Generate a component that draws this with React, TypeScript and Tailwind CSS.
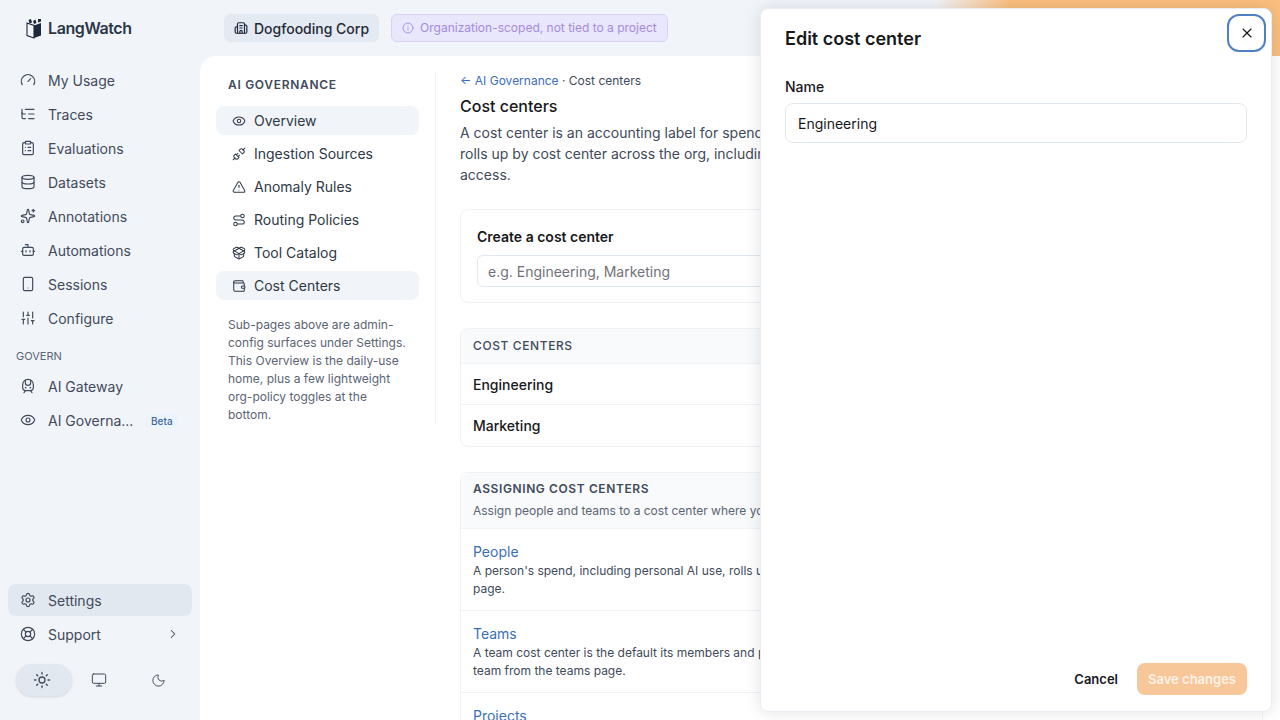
import {
  Building2, ChevronRight, ClipboardList, Database, Eye, Gauge, Info, LifeBuoy, ListTree, Monitor, Moon,
  PackageOpen, Route, Settings, SlidersVertical, Smartphone, Sparkles, Sun, TrainFront, TriangleAlert, Unplug, Wallet, X, Bot,
} from "lucide-react";

const mainNav = [
  { label: "My Usage", icon: Gauge },
  { label: "Traces", icon: ListTree },
  { label: "Evaluations", icon: ClipboardList },
  { label: "Datasets", icon: Database },
  { label: "Annotations", icon: Sparkles },
  { label: "Automations", icon: Bot },
  { label: "Sessions", icon: Smartphone },
  { label: "Configure", icon: SlidersVertical },
];

const subNav = [
  { label: "Overview", icon: Eye, active: true },
  { label: "Ingestion Sources", icon: Unplug, active: false },
  { label: "Anomaly Rules", icon: TriangleAlert, active: false },
  { label: "Routing Policies", icon: Route, active: false },
  { label: "Tool Catalog", icon: PackageOpen, active: false },
  { label: "Cost Centers", icon: Wallet, active: true },
];

function Logo() {
  return (
    <svg width="16" height="21" viewBox="0 0 16 21" className="shrink-0">
      <path d="M1 5 L8 7.5 V20 L1 17.5 Z" fill="none" stroke="#1e293b" strokeWidth="1.1" />
      <path d="M8 7.5 L15 5 V17.5 L8 20 Z" fill="#1e293b" />
      <path d="M2.5 2 L5 1 L6 4.5 L3.5 5.5 Z M7 3 L9.5 1.5 L10.5 5 L8 6 Z M12 1 L15 1 L15 3.5 L12 4.5 Z" fill="#1e293b" />
    </svg>
  );
}

function SideItem({ label, icon: Icon }: { label: string; icon: typeof Eye }) {
  return (
    <div className="flex h-[34px] items-center gap-3 pl-3 text-[#414a59]">
      <Icon size={16} strokeWidth={1.75} className="shrink-0" />
      <span className="text-[14px]">{label}</span>
    </div>
  );
}

export default function App() {
  return (
    <div className="relative flex h-screen w-[1280px] overflow-hidden bg-[#f1f5fa] font-['Inter',sans-serif] text-[#18181b]">
      <aside className="flex h-full w-[200px] shrink-0 flex-col px-2">
        <div className="flex h-[56px] items-center gap-[6px] pl-[18px] text-[16px] font-semibold tracking-[-0.4px] text-[#2b3648]">
          <Logo />
          <span>LangWatch</span>
        </div>
        <nav className="mt-[7px] flex flex-col">
          {mainNav.map((item) => (
            <SideItem key={item.label} {...item} />
          ))}
          <div className="mt-[13px] mb-[5px] pl-2 text-[11px] leading-[16px] text-[#5b6472]">GOVERN</div>
          <SideItem label="AI Gateway" icon={TrainFront} />
          <div className="flex h-[34px] items-center gap-3 pl-3 text-[#414a59]">
            <Eye size={16} strokeWidth={1.75} className="shrink-0" />
            <span className="w-[86px] whitespace-nowrap text-[14px]">AI Governa...</span>
            <span className="mt-[1px] rounded bg-[#ebf4fb] px-[5px] text-[10px] leading-[14px] font-medium text-[#3f6a9e]">Beta</span>
          </div>
        </nav>
        <div className="mt-auto flex flex-col pb-6">
          <div className="rounded-lg bg-[#e2e8f0]">
            <div className="-my-[1px]"><SideItem label="Settings" icon={Settings} /></div>
          </div>
          <div className="relative mt-[1px]">
            <SideItem label="Support" icon={LifeBuoy} />
            <ChevronRight size={14} strokeWidth={1.75} className="absolute top-[10px] right-3 text-[#414a59]" />
          </div>
          <div className="mt-[13px] flex items-center pl-2 text-[#414a59]">
            <div className="flex h-8 w-[56px] items-center justify-center rounded-full bg-[#e2e8f0] pr-[5px] shadow-sm">
              <Sun size={18} strokeWidth={1.75} />
            </div>
            <div className="flex w-[54px] justify-center"><Monitor size={16} strokeWidth={1.5} /></div>
            <div className="ml-[5px] flex w-[54px] justify-center"><Moon size={15} strokeWidth={1.5} /></div>
          </div>
        </div>
      </aside>

      <div className="flex min-w-0 flex-1 flex-col bg-gradient-to-r from-[#f1f5fa] from-[68%] to-[#fbbf7e] to-[75%]">
        <header className="flex h-[56px] shrink-0 items-center gap-3 pl-6">
          <div className="flex h-7 items-center gap-[6px] rounded-md bg-[#e4eaf2] px-[10px] text-[14px] font-medium text-[#1f2937]">
            <Building2 size={14} strokeWidth={2} />
            Dogfooding Corp
          </div>
          <div className="flex h-7 items-center gap-[6px] rounded-md border border-[#d8d0f7] bg-[#e9e7fb] px-[10px] text-[12px] text-[#a68ade]">
            <Info size={12} strokeWidth={1.75} />
            Organization-scoped, not tied to a project
          </div>
        </header>

        <main className="flex min-h-0 flex-1 overflow-hidden rounded-tl-2xl bg-white">
          <div className="mt-4 flex h-[352px] w-[236px] shrink-0 flex-col border-r border-[#eff2f6] pr-4 pl-4">
            <div className="mt-[1px] pl-3 text-[12px] leading-[24px] font-semibold tracking-[0.7px] text-[#414a59]">AI GOVERNANCE</div>
            <div className="mt-[9px] flex flex-col gap-1">
              {subNav.map(({ label, icon: Icon, active }) => (
                <div key={label} className={`flex h-[29px] items-center gap-2 rounded-lg pl-4 text-[14px] text-[#2f3846] ${active ? "bg-[#f1f5f9]" : ""}`}>
                  <Icon size={14} strokeWidth={1.75} className="shrink-0" />
                  {label}
                </div>
              ))}
            </div>
            <p className="mt-[16px] pr-2 pl-3 text-[12px] leading-[18px] text-[#5b6472]">
              Sub-pages above are admin-config surfaces under Settings. This Overview is the daily-use home, plus a few lightweight org-policy toggles at the bottom.
            </p>
          </div>

          <div className="w-[827px] shrink-0 pt-4 pl-6">
            <div className="text-[12px] leading-[18px] text-[#414a59]">
              <span className="text-[#3b6fb5]">← AI Governance</span> · Cost centers
            </div>
            <h1 className="mt-[4px] text-[16px] leading-[24px] font-medium">Cost centers</h1>
            <p className="mt-[4px] text-[14px] leading-[21px] text-[#414a59]">
              A cost center is an accounting label for spend across teams and projects. Usage<br />
              rolls up by cost center across the org, including personal AI use and virtual key<br />
              access.
            </p>

            <section className="mt-[24px] h-[94px] rounded-lg border border-[#eff2f6] px-4 pt-[17px]">
              <h2 className="text-[14px] leading-[20px] font-semibold">Create a cost center</h2>
              <div className="mt-2 flex h-8 items-center rounded-md border border-[#e2e8f0] px-[10px] text-[14px] text-[#71717a]">e.g. Engineering, Marketing</div>
            </section>

            <section className="mt-[25px] overflow-hidden rounded-lg border border-[#eff2f6]">
              <div className="flex h-[35px] items-center border-b border-[#eff2f6] bg-[#f8fafc] px-3 text-[12px] font-medium tracking-[0.6px] text-[#414a59]">COST CENTERS</div>
              <div className="flex h-[41px] items-center border-b border-[#eff2f6] px-3 text-[14px] font-medium">Engineering</div>
              <div className="flex h-[41px] items-center pb-[1px] px-3 text-[14px] font-medium">Marketing</div>
            </section>

            <section className="mt-[25px] rounded-t-lg border border-[#eff2f6]">
              <div className="h-[56px] border-b border-[#eff2f6] bg-[#f8fafc] px-3 pt-[7px]">
                <div className="text-[12px] leading-[18px] font-semibold tracking-[0.6px] text-[#414a59]">ASSIGNING COST CENTERS</div>
                <div className="mt-1 text-[12px] leading-[18px] text-[#5b6472]">Assign people and teams to a cost center where you manage them in settings.</div>
              </div>
              <div className="h-[82px] border-b border-[#eff2f6] px-3 pt-[13px]">
                <div className="text-[14px] leading-[19px] text-[#3b6fb5]">People</div>
                <div className="mt-[1px] text-[12px] leading-[18px] text-[#414a59]">A person's spend, including personal AI use, rolls up to their cost center. Set it from the members<br />page.</div>
              </div>
              <div className="h-[82px] border-b border-[#eff2f6] px-3 pt-[13px]">
                <div className="text-[14px] leading-[19px] text-[#3b6fb5]">Teams</div>
                <div className="mt-[1px] text-[12px] leading-[18px] text-[#414a59]">A team cost center is the default its members and projects inherit. Set it on each<br />team from the teams page.</div>
              </div>
              <div className="px-3 pt-[13px]">
                <div className="text-[14px] leading-[19px] text-[#3b6fb5]">Projects</div>
              </div>
            </section>
          </div>
        </main>
      </div>

      <div className="absolute top-2 right-2 bottom-2 flex w-[512px] flex-col rounded-lg border border-[#e9edf3] bg-white shadow-[0_0_16px_rgba(15,23,42,0.12)]">
        <div className="flex h-[58px] shrink-0 items-center pl-6 text-[18px] font-semibold">Edit cost center</div>
        <button className="absolute top-[5px] right-[5px] flex h-[38px] w-[39px] items-center justify-center rounded-xl border-2 border-[#4f7fc4]">
          <X size={16} strokeWidth={1.75} />
        </button>
        <div className="flex-1 px-6 pt-[10px]">
          <div className="text-[14px] leading-[20px] font-medium">Name</div>
          <div className="mt-[6px] flex h-10 items-center rounded-lg border border-[#e2e8f0] px-3 text-[14px]">Engineering</div>
        </div>
        <div className="flex items-center justify-end gap-2 px-6 pb-4">
          <button className="h-8 px-[11px] pt-[1px] text-[13px] font-semibold">Cancel</button>
          <button className="h-8 w-[110px] rounded-lg bg-[#f7c79a] pt-[1px] text-[13px] font-semibold text-[#fdf3e8]">Save changes</button>
        </div>
      </div>
    </div>
  );
}
